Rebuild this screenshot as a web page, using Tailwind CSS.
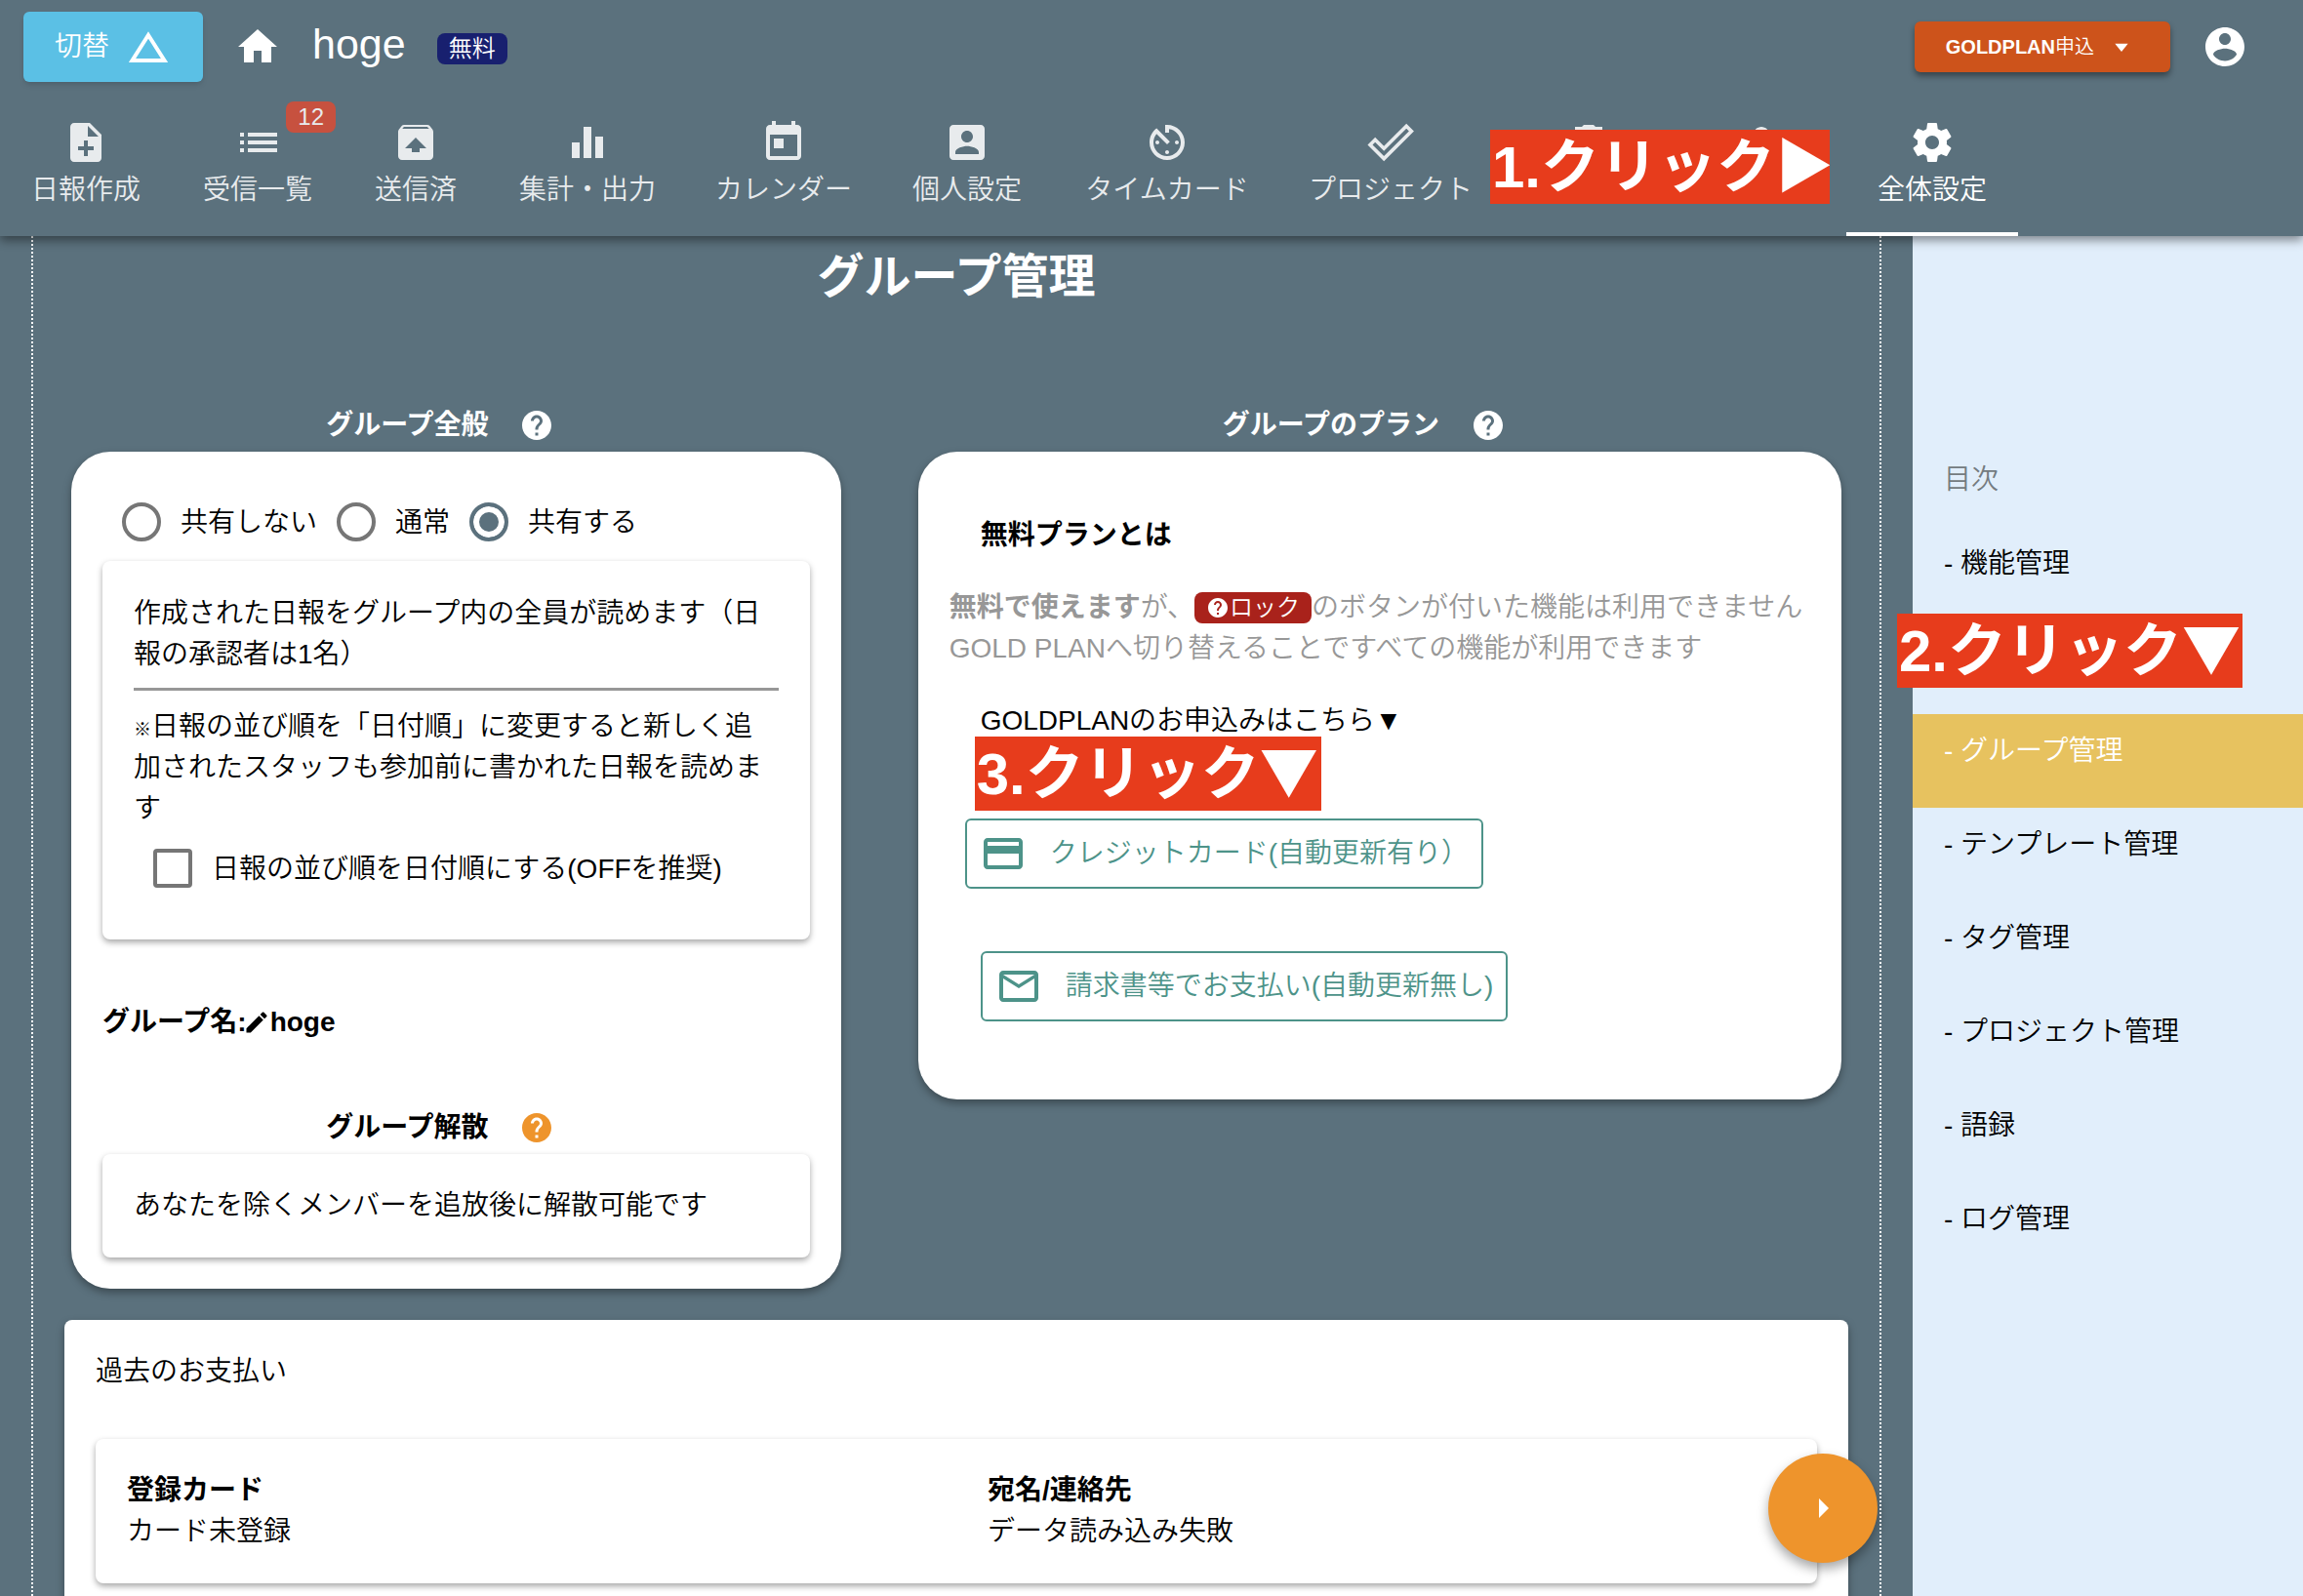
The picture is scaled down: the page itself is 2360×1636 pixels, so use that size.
<!DOCTYPE html>
<html lang="ja">
<head>
<meta charset="utf-8">
<title>グループ管理</title>
<script src="https://cdn.jsdelivr.net/npm/@tailwindcss/browser@4"></script>
</head>
<body class="flex h-screen flex-col overflow-hidden bg-[#5b717d] font-['Liberation_Sans','Noto_Sans_CJK_JP',sans-serif] text-[28px] leading-[42px] font-[350] text-black">

<svg class="hidden">
  <symbol id="help" viewBox="0 0 24 24"><path d="M12 2C6.48 2 2 6.48 2 12s4.48 10 10 10 10-4.48 10-10S17.52 2 12 2zm1 17h-2v-2h2v2zm2.07-7.75l-.9.92C13.45 12.9 13 13.5 13 15h-2v-.5c0-1.1.45-2.1 1.17-2.83l1.24-1.26c.37-.36.59-.86.59-1.41 0-1.1-.9-2-2-2s-2 .9-2 2H8c0-2.21 1.79-4 4-4s4 1.79 4 4c0 .88-.36 1.68-.93 2.25z"/></symbol>
</svg>

<header class="relative z-10 shrink-0 bg-[#5b717d] text-white shadow-[0_4px_10px_rgba(0,0,0,0.45)]">
  <div class="flex h-24 items-center pl-6 pr-[56px]">
    <button class="flex h-[72px] w-[184px] items-center gap-5 rounded-md bg-[#5bc0e5] pl-8 shadow-md">
      <span>切替</span>
      <svg class="h-8 w-10" viewBox="0 0 40 32" fill="none" stroke="currentColor" stroke-width="4"><path d="M20 4L36.500 30H3.500z"/></svg>
    </button>
    <a href="#" aria-label="ホーム" class="ml-8"><svg class="size-12" viewBox="0 0 24 24" fill="currentColor"><path d="M10 20v-6h4v6h5v-8h3L12 3 2 12h3v8z"/></svg></a>
    <span class="ml-8 pb-1.5 text-[43px] leading-[60px]">hoge</span>
    <span class="ml-8 mt-1 rounded-lg bg-[#18206f] px-3 text-[24px] leading-8">無料</span>
    <button class="ml-auto flex h-[52px] items-center rounded-md bg-[#cd531b] pl-8 pr-[30px] text-[20px] shadow-[0_4px_6px_rgba(0,0,0,0.4)]">
      <span><span class="font-bold">GOLDPLAN</span>申込</span>
      <svg class="ml-2 size-10" viewBox="0 0 24 24" fill="currentColor"><path d="M8 10l4 5 4-5z"/></svg>
    </button>
    <button aria-label="アカウント" class="ml-8"><svg class="size-12" viewBox="0 0 24 24" fill="currentColor"><path d="M12 2C6.48 2 2 6.480 2 12s4.480 10 10 10 10-4.480 10-10S17.520 2 12 2zm0 3c1.660 0 3 1.340 3 3s-1.340 3-3 3-3-1.340-3-3 1.340-3 3-3zm0 14.200c-2.500 0-4.710-1.280-6-3.220.030-1.990 4-3.080 6-3.080 1.990 0 5.970 1.090 6 3.080-1.290 1.940-3.500 3.220-6 3.220z"/></svg></button>
  </div>

  <nav class="flex h-[146px] whitespace-nowrap text-[#e8ebed] [&>a]:flex [&>a]:shrink-0 [&>a]:flex-col [&>a]:items-center [&>a]:gap-1 [&>a]:pt-[26px]">
    <a href="#" class="w-[176px]"><svg class="size-12" viewBox="0 0 24 24" fill="currentColor"><path d="M14 2H6c-1.100 0-1.990.9-1.990 2L4 20c0 1.100.89 2 1.990 2H18c1.100 0 2-.9 2-2V8l-6-6zm2 14h-3v3h-2v-3H8v-2h3v-3h2v3h3v2zm-3-7V3.500L18.500 9H13z"/></svg>日報作成</a>
    <a href="#" class="relative w-[176px]"><svg class="size-12" viewBox="0 0 24 24" fill="currentColor"><path d="M3 13h2v-2H3v2zm0 4h2v-2H3v2zm0-8h2V7H3v2zm4 4h15v-2H7v2zm0 4h15v-2H7v2zM7 7v2h15V7H7z"/></svg>受信一覧
      <span class="absolute right-2 top-2 rounded-lg bg-[#c7513f] px-3 text-[24px] leading-8">12</span></a>
    <a href="#" class="w-[148px]"><svg class="size-12" viewBox="0 0 24 24" fill="currentColor"><path d="M20.550 5.220l-1.390-1.680C18.880 3.210 18.470 3 18 3H6c-.47 0-.88.21-1.150.55L3.460 5.220C3.170 5.570 3 6.010 3 6.500V19c0 1.100.89 2 2 2h14c1.100 0 2-.9 2-2V6.500c0-.49-.17-.93-.45-1.280zM12 9.500l5.500 5.500H14v2h-4v-2H6.500L12 9.500zM5.120 5l.82-1h12l.93 1H5.120z"/></svg>送信済</a>
    <a href="#" class="w-[204px]"><svg class="size-12" viewBox="0 0 24 24" fill="currentColor"><path d="M4 12h4v8H4zM10 4h4v16h-4zM16 9h4v11h-4z"/></svg>集計・出力</a>
    <a href="#" class="w-[198px]"><svg class="size-12" viewBox="0 0 24 24" fill="currentColor"><path d="M19 3h-1V1h-2v2H8V1H6v2H5c-1.110 0-1.990.9-1.990 2L3 19c0 1.100.89 2 2 2h14c1.100 0 2-.9 2-2V5c0-1.100-.9-2-2-2zm0 16H5V8h14v11zM7 10h5v5H7z"/></svg>カレンダー</a>
    <a href="#" class="w-[178px]"><svg class="size-12" viewBox="0 0 24 24" fill="currentColor"><path d="M3 5v14c0 1.100.89 2 2 2h14c1.100 0 2-.9 2-2V5c0-1.100-.9-2-2-2H5c-1.110 0-2 .9-2 2zm12 4c0 1.660-1.340 3-3 3s-3-1.340-3-3 1.340-3 3-3 3 1.340 3 3zm-9 8c0-2 4-3.100 6-3.100s6 1.100 6 3.100v1H6v-1z"/></svg>個人設定</a>
    <a href="#" class="w-[232px]"><svg class="size-12" viewBox="0 0 24 24" fill="currentColor"><path d="M11 17c0 .55.45 1 1 1s1-.45 1-1-.45-1-1-1-1 .45-1 1zm0-14v4h2V5.080c3.390.49 6 3.390 6 6.920 0 3.870-3.130 7-7 7s-7-3.130-7-7c0-1.680.59-3.220 1.580-4.420L12 13l1.410-1.410-6.800-6.800v.02C4.420 6.450 3 9.050 3 12c0 4.970 4.020 9 9 9 4.970 0 9-4.030 9-9s-4.030-9-9-9h-1zm7 9c0-.55-.45-1-1-1s-1 .45-1 1 .45 1 1 1 1-.45 1-1zM6 12c0 .55.45 1 1 1s1-.45 1-1-.45-1-1-1-1 .45-1 1z"/></svg>タイムカード</a>
    <a href="#" class="w-[226px]"><svg class="size-12" viewBox="0 0 24 24" fill="none" stroke="currentColor" stroke-width="1.800"><path d="M1.500 13.200L4.100 10.600 8.600 15.100 20.100 3.600 22.700 6.200 8.600 20.300z"/></svg>プロジェクト</a>
    <div class="relative flex w-[354px] shrink-0 pt-[26px]">
      <span class="flex w-[180px] justify-center"><svg class="size-12" viewBox="0 0 24 24" fill="currentColor"><path d="M6 19c0 1.100.9 2 2 2h8c1.100 0 2-.9 2-2V7H6v12zM19 4h-3.500l-1-1h-5l-1 1H5v2h14V4z"/></svg></span>
      <span class="flex w-[174px] justify-center"><svg class="size-12" viewBox="0 0 24 24" fill="currentColor"><path d="M12 12c2.210 0 4-1.790 4-4s-1.790-4-4-4-4 1.790-4 4 1.790 4 4 4zm0 2c-2.670 0-8 1.340-8 4v2h16v-2c0-2.660-5.330-4-8-4z"/></svg></span>
      <strong class="absolute -left-[11px] top-[37px] h-[76px] w-[348px] bg-[#e73c1c] pl-0.5 text-[60px] leading-[78px] font-bold text-white">1.クリック▶</strong>
    </div>
    <a href="#" class="w-[176px] border-b-4 border-white text-white"><svg class="size-12" viewBox="0 0 24 24" fill="currentColor"><path d="M19.430 12.980c.04-.32.07-.64.07-.98s-.03-.66-.07-.98l2.110-1.650c.19-.15.24-.42.12-.64l-2-3.460c-.12-.22-.39-.3-.61-.22l-2.490 1c-.52-.4-1.080-.73-1.690-.98l-.38-2.650C14.460 2.180 14.250 2 14 2h-4c-.25 0-.46.18-.49.42l-.38 2.650c-.61.25-1.170.59-1.690.98l-2.490-1c-.23-.09-.49 0-.61.22l-2 3.460c-.13.22-.07.49.12.64l2.110 1.650c-.04.32-.07.65-.07.98s.03.66.07.98l-2.110 1.650c-.19.15-.24.42-.12.64l2 3.460c.12.22.39.3.61.22l2.490-1c.52.4 1.080.73 1.690.98l.38 2.650c.03.24.24.42.49.42h4c.25 0 .46-.18.49-.42l.38-2.650c.61-.25 1.170-.59 1.690-.98l2.490 1c.23.09.49 0 .61-.22l2-3.460c.12-.22.07-.49-.12-.64l-2.110-1.650zM12 15.500c-1.930 0-3.500-1.570-3.500-3.500s1.570-3.500 3.500-3.500 3.500 1.570 3.500 3.500-1.570 3.500-3.500 3.500z"/></svg>全体設定</a>
  </nav>
</header>

<div class="flex min-h-0 flex-1">
  <main class="relative min-w-0 flex-1 px-8">
    <div class="h-full overflow-hidden border-x-2 border-dotted border-white pt-1.5">
      <h1 class="text-center text-[48px] leading-[72px] font-bold text-white">グループ管理</h1>

      <div class="mt-[95px] grid grid-cols-[5fr_6fr] items-start gap-x-[79px] px-[39px]">
        <section>
          <h2 class="mb-1.5 flex items-center justify-center gap-8 pr-8 font-bold text-white">グループ全般
            <button aria-label="グループ全般のヘルプ"><svg class="size-9" fill="currentColor"><use href="#help"/></svg></button></h2>
          <div class="rounded-[40px] bg-white px-8 pb-8 pt-[52px] shadow-[0_4px_8px_rgba(0,0,0,0.35)]">
            <div class="flex gap-5 pl-5">
              <label class="flex h-10 gap-5"><input type="radio" name="share" class="size-10 appearance-none rounded-full border-4 border-[#767676] bg-white">共有しない</label>
              <label class="flex h-10 gap-5"><input type="radio" name="share" class="size-10 appearance-none rounded-full border-4 border-[#767676] bg-white">通常</label>
              <label class="flex h-10 gap-5"><input type="radio" name="share" checked class="size-10 appearance-none rounded-full border-4 border-[#5b717d] bg-[#5b717d] shadow-[inset_0_0_0_6px_white]">共有する</label>
            </div>
            <div class="mt-5 rounded-lg bg-white px-8 pb-[53px] pt-[33px] shadow-[0_3px_6px_rgba(0,0,0,0.35)]">
              <p>作成された日報をグループ内の全員が読めます（日報の承認者は1名）</p>
              <hr class="mb-4 mt-[13px] border-t-[3px] border-[#979797]">
              <p><span class="text-[18px] leading-none">※</span>日報の並び順を「日付順」に変更すると新しく追加されたスタッフも参加前に書かれた日報を読めます</p>
              <label class="mt-5 flex h-10 gap-5 whitespace-nowrap pl-5"><input type="checkbox" class="size-10 appearance-none rounded-sm border-4 border-[#767676] bg-white">日報の並び順を日付順にする(OFFを推奨)</label>
            </div>
            <h3 class="mt-16 flex items-center font-bold">グループ名:<svg class="-ml-1 size-7" viewBox="0 0 24 24" fill="currentColor"><path d="M3 17.250V21h3.750L17.810 9.940l-3.750-3.750L3 17.250zM20.710 7.040c.39-.39.39-1.020 0-1.410l-2.340-2.340c-.39-.39-1.020-.39-1.410 0l-1.830 1.830 3.750 3.750 1.830-1.830z"/></svg>hoge</h3>
            <h3 class="mb-1.5 mt-[66px] flex items-center justify-center gap-8 pr-8 font-bold">グループ解散
              <button aria-label="グループ解散のヘルプ"><svg class="size-9 text-[#ee942c]" fill="currentColor"><use href="#help"/></svg></button></h3>
            <div class="rounded-lg bg-white p-8 shadow-[0_3px_6px_rgba(0,0,0,0.35)]">あなたを除くメンバーを追放後に解散可能です</div>
          </div>
        </section>

        <section>
          <h2 class="mb-1.5 flex items-center justify-center gap-8 pr-8 font-bold text-white">グループのプラン
            <button aria-label="グループのプランのヘルプ"><svg class="size-9" fill="currentColor"><use href="#help"/></svg></button></h2>
          <div class="relative flex flex-col items-start whitespace-nowrap rounded-[40px] bg-white px-8 pb-20 pt-[65px] shadow-[0_4px_8px_rgba(0,0,0,0.35)]">
            <h3 class="ml-8 font-bold">無料プランとは</h3>
            <div class="mt-8 text-[#979797]">
              <p class="flex items-center"><b class="font-bold">無料で使えます</b>が、<span class="flex items-center rounded-lg bg-[#a9221b] px-3 text-[24px] leading-8 text-white"><svg class="size-6" fill="currentColor"><use href="#help"/></svg>ロック</span>のボタンが付いた機能は利用できません</p>
              <p>GOLD PLANへ切り替えることですべての機能が利用できます</p>
            </div>
            <p class="ml-8 mt-8">GOLDPLANのお申込みはこちら▼</p>
            <strong class="absolute left-[58px] top-[292px] h-[76px] w-[355px] bg-[#e73c1c] pl-0.5 text-[60px] leading-[78px] font-bold text-white">3.クリック<span class="font-['Noto_Sans_CJK_JP'] leading-none">▼</span></strong>
            <button class="ml-4 mt-[79px] flex h-[72px] items-center gap-6 rounded-md border-2 border-[#4d9389] px-[13px] text-[#4d9389]"><svg class="size-12" viewBox="0 0 24 24" fill="currentColor"><path d="M20 4H4c-1.110 0-1.990.89-1.990 2L2 18c0 1.110.89 2 2 2h16c1.110 0 2-.89 2-2V6c0-1.110-.89-2-2-2zm0 14H4v-6h16v6zm0-10H4V6h16v2z"/></svg>クレジットカード(自動更新有り）</button>
            <button class="ml-8 mt-16 flex h-[72px] items-center gap-6 rounded-md border-2 border-[#4d9389] px-[13px] text-[#4d9389]"><svg class="size-12" viewBox="0 0 24 24" fill="currentColor"><path d="M20 4H4c-1.100 0-1.990.9-1.990 2L2 18c0 1.100.9 2 2 2h16c1.100 0 2-.9 2-2V6c0-1.100-.9-2-2-2zm0 14H4V8l8 5 8-5v10zm-8-7L4 6h16l-8 5z"/></svg>請求書等でお支払い(自動更新無し)</button>
          </div>
        </section>
      </div>

      <section class="mx-8 mt-8 rounded-lg bg-white p-8 shadow-[0_4px_8px_rgba(0,0,0,0.35)]">
        <h2>過去のお支払い</h2>
        <dl class="mt-12 grid grid-cols-2 rounded-lg bg-white py-8 shadow-[0_3px_6px_rgba(0,0,0,0.35)]">
          <div class="px-8"><dt class="font-bold">登録カード</dt><dd>カード未登録</dd></div>
          <div class="px-8"><dt class="font-bold">宛名/連絡先</dt><dd>データ読み込み失敗</dd></div>
        </dl>
      </section>
    </div>
    <button aria-label="メニューを開く" class="absolute bottom-[34px] right-9 flex size-28 items-center justify-center rounded-full bg-[#ee942c] text-white shadow-[0_6px_12px_rgba(0,0,0,0.35)]"><svg class="size-12" viewBox="0 0 24 24" fill="currentColor"><path d="M10 17l5-5-5-5v10z"/></svg></button>
  </main>

  <aside class="w-[400px] shrink-0 bg-[#e1eefb] pt-[229px]">
    <h2 class="px-8 text-[#747b80]">目次</h2>
    <ul class="mt-[27px] [&>li]:h-24 [&>li>a]:block [&>li>a]:h-full [&>li>a]:px-8 [&>li>a]:pt-[17px]">
      <li><a href="#">- 機能管理</a></li>
      <li class="relative"><strong class="absolute -left-4 -top-[7px] h-[76px] w-[354px] bg-[#e73c1c] pl-0.5 text-[60px] leading-[78px] font-bold text-white">2.クリック<span class="font-['Noto_Sans_CJK_JP'] leading-none">▼</span></strong></li>
      <li><a href="#" aria-current="page" class="bg-[#e7c25f] text-white">- グループ管理</a></li>
      <li><a href="#">- テンプレート管理</a></li>
      <li><a href="#">- タグ管理</a></li>
      <li><a href="#">- プロジェクト管理</a></li>
      <li><a href="#">- 語録</a></li>
      <li><a href="#">- ログ管理</a></li>
    </ul>
  </aside>
</div>
</body>
</html>
